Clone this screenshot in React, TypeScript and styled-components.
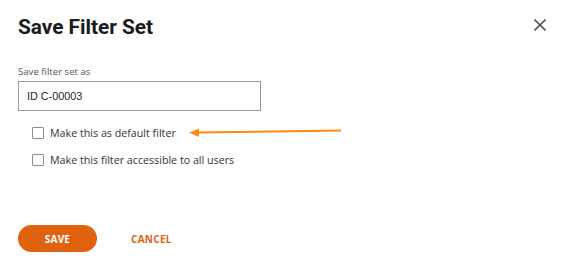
import React from "react";
import styled, { createGlobalStyle } from "styled-components";

const Global = createGlobalStyle`
  html, body { margin: 0; padding: 0; background: #fff; }
  body { font-family: "Open Sans", "Liberation Sans", sans-serif; }
  * { box-sizing: border-box; }
`;

const Dialog = styled.div`
  position: relative;
  width: 567px;
  height: 261px;
  padding: 16px 21px 0 18px;
  display: flex;
  flex-direction: column;
`;

const Header = styled.div`
  display: flex;
  justify-content: space-between;
  align-items: flex-start;
`;

const Title = styled.h1`
  margin: 0;
  font-family: Roboto, "Liberation Sans", sans-serif;
  font-weight: 700;
  font-size: 20.8px;
  line-height: 23px;
  color: #1b1b1b;
`;

const CloseButton = styled.button`
  margin-top: 3px;
  padding: 0;
  border: 0;
  background: none;
  width: 12px;
  height: 12px;
  display: flex;
  cursor: pointer;
`;

const Label = styled.label`
  margin-top: 27px;
  font-size: 9.6px;
  line-height: 12px;
  color: #555;
`;

const Input = styled.input`
  margin-top: 3px;
  width: 243px;
  height: 30px;
  border: 1px solid #9a9a9a;
  padding: 0 8px;
  font-family: "Liberation Sans", Arial, sans-serif;
  font-size: 10.8px;
  color: #1e1e1e;
  outline: none;
`;

const Options = styled.div`
  margin-top: 14px;
  margin-left: 14px;
  display: flex;
  flex-direction: column;
  gap: 11px;
`;

const Row = styled.label`
  display: flex;
  align-items: center;
  gap: 6px;
  font-size: 10.7px;
  line-height: 16px;
  color: #333;
`;

const Box = styled.span`
  width: 12px;
  height: 12px;
  border: 1px solid #8c8c8c;
  border-radius: 1px;
  background: #fff;
  flex: none;
`;

const Actions = styled.div`
  margin-top: 57px;
  display: flex;
  align-items: center;
  gap: 34px;
`;

const SaveButton = styled.button`
  width: 79px;
  height: 27px;
  border: 0;
  border-radius: 14px;
  background: #e0620f;
  color: #fff;
  font-family: "Open Sans", sans-serif;
  font-weight: 700;
  font-size: 10px;
  letter-spacing: 0.2px;
  cursor: pointer;
`;

const CancelButton = styled.button`
  border: 0;
  padding: 0;
  background: none;
  color: #e0620f;
  font-family: "Open Sans", sans-serif;
  font-weight: 700;
  font-size: 10px;
  letter-spacing: 0.3px;
  cursor: pointer;
`;

const Annotation = styled.svg`
  position: absolute;
  left: 186px;
  top: 124px;
  width: 160px;
  height: 16px;
  overflow: visible;
`;

export default function App() {
  return (
    <>
      <Global />
      <Dialog>
        <Header>
          <Title>Save Filter Set</Title>
          <CloseButton aria-label="Close">
            <svg width="12" height="12" viewBox="0 0 12 12">
              <path d="M0.5 0.5 L11.5 11.5 M11.5 0.5 L0.5 11.5" stroke="#555" strokeWidth="1.6" />
            </svg>
          </CloseButton>
        </Header>
        <Label>Save filter set as</Label>
        <Input defaultValue="ID C-00003" />
        <Options>
          <Row><Box />Make this as default filter</Row>
          <Row><Box />Make this filter accessible to all users</Row>
        </Options>
        <Actions>
          <SaveButton>SAVE</SaveButton>
          <CancelButton>CANCEL</CancelButton>
        </Actions>
        <Annotation viewBox="0 0 160 16">
          <line x1="155" y1="6.5" x2="10" y2="8.5" stroke="#ff8a12" strokeWidth="2" />
          <polygon points="3,8.7 13,4.5 13,13" fill="#ff8a12" />
        </Annotation>
      </Dialog>
    </>
  );
}
